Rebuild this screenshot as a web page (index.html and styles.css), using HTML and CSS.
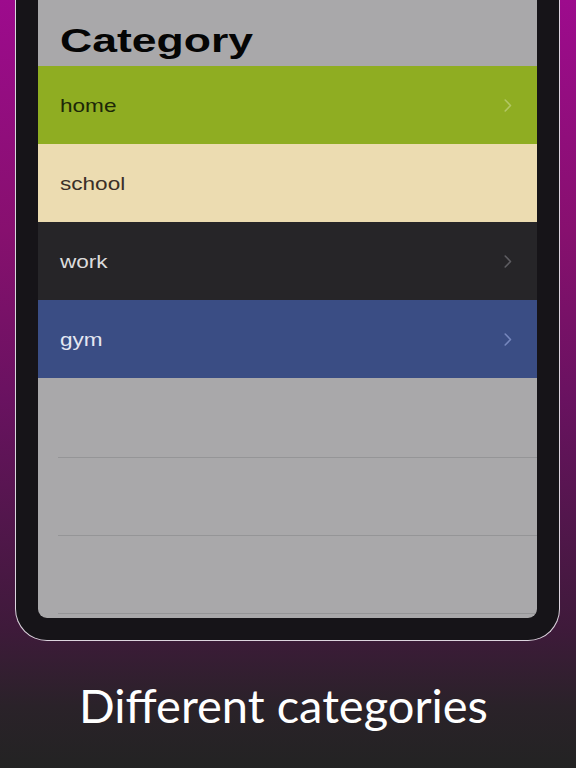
FILE: index.html
```html
<!DOCTYPE html>
<html>
<head>
<meta charset="utf-8">
<link rel="stylesheet" href="styles.css">
</head>
<body>
<div class="stage">
  <div class="device">
    <div class="screen">
      <div class="header"><span class="title">Category</span></div>
      <div class="list">
        <div class="row home"><span class="label">home</span><svg class="chev" viewBox="0 0 8 13"><polyline points="1.2,1 6.5,6.5 1.2,12"/></svg></div>
        <div class="row school"><span class="label">school</span></div>
        <div class="row work"><span class="label">work</span><svg class="chev" viewBox="0 0 8 13"><polyline points="1.2,1 6.5,6.5 1.2,12"/></svg></div>
        <div class="row gym"><span class="label">gym</span><svg class="chev" viewBox="0 0 8 13"><polyline points="1.2,1 6.5,6.5 1.2,12"/></svg></div>
        <div class="row empty"></div>
        <div class="row empty"></div>
        <div class="row empty"></div>
      </div>
    </div>
  </div>
  <div class="caption">Different categories</div>
</div>
</body>
</html>
```
FILE: styles.css
```css
html, body {
  margin: 0;
  padding: 0;
}
.stage {
  width: 576px;
  height: 768px;
  overflow: hidden;
  background: linear-gradient(180deg, #9d0b8d 0%, #87106f 30%, #691260 52%, #3e1a3a 82%, #2a2229 92%, #232323 100%);
  font-family: "Liberation Sans", Arial, sans-serif;
}
.device {
  margin-left: 15px;
  width: 545px;
  box-sizing: border-box;
  margin-top: -30px;
  padding: 30px 22px 21.5px 21.5px;
  background: #161418;
  border: 1.5px solid #dcd4de;
  border-top: none;
  border-radius: 0 0 32px 32px;
}
.screen {
  background: #a9a8aa;
  height: 618px;
  border-radius: 0 0 9px 9px;
  overflow: hidden;
}
.header {
  height: 66px;
  box-sizing: border-box;
  padding-left: 22px;
  padding-top: 20px;
}
.title {
  display: inline-block;
  font-weight: bold;
  font-size: 34px;
  line-height: 40px;
  color: #050505;
  transform: scaleX(1.31);
  transform-origin: left center;
}
.row {
  height: 78px;
  display: flex;
  align-items: center;
  justify-content: space-between;
  padding-left: 22px;
  padding-right: 25px;
  box-sizing: border-box;
}
.label {
  display: inline-block;
  font-size: 18.5px;
  padding-top: 2px;
  transform: scaleX(1.22);
  transform-origin: left center;
}
.chev {
  width: 8px;
  height: 13px;
  fill: none;
  stroke-width: 1.6;
  stroke-linecap: round;
  stroke-linejoin: round;
}
.home { background: #8fad22; color: #1d2708; }
.home .chev { stroke: #b2c764; }
.school { background: #ecdcb1; color: #3a2f28; }
.work { background: #262528; color: #dcdcdc; }
.work .chev { stroke: #5e5d62; }
.gym { background: #3a4d84; color: #e4e7f2; }
.gym .chev { stroke: #7687bd; }
.empty {
  margin-left: 20px;
  padding-left: 0;
  border-bottom: 1.5px solid #959597;
}
.gym + .empty {
  height: 79.5px;
}
.caption {
  margin-top: 35px;
  padding-right: 9px;
  text-align: center;
  font-family: Lato, "Open Sans", sans-serif;
  font-size: 47px;
  line-height: 58px;
  color: #ffffff;
}
```
